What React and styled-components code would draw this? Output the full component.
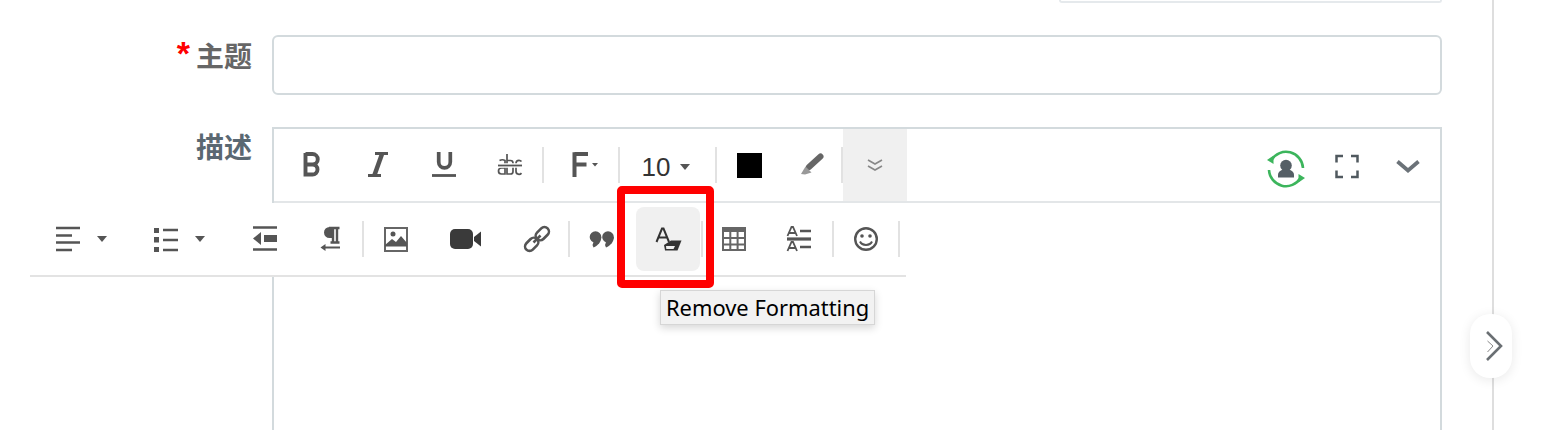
import styled, { createGlobalStyle } from "styled-components";

const GlobalStyle = createGlobalStyle`
  html, body {
    margin: 0;
    padding: 0;
    background: #fff;
    overflow: hidden;
  }
  * {
    box-sizing: border-box;
  }
`;

const Page = styled.div`
  display: flex;
  width: 1546px;
  height: 430px;
  overflow: hidden;
  position: relative;
  font-family: "Noto Sans CJK SC", "Liberation Sans", sans-serif;
`;

const Main = styled.main`
  width: 1492px;
  height: 430px;
  flex: none;
`;

const Rail = styled.aside`
  flex: 1;
  border-left: 2px solid #dedede;
`;

const Handle = styled.button`
  position: absolute;
  left: 1470px;
  top: 314px;
  width: 42px;
  height: 64px;
  padding: 0;
  border: none;
  border-radius: 20px;
  background: #fff;
  box-shadow: 0 2px 12px rgba(0, 0, 0, 0.09);
  display: flex;
  align-items: center;
  justify-content: center;
`;

const PrevField = styled.div`
  width: 383px;
  height: 3px;
  margin-left: 1059px;
  border: 2px solid #e5e9ec;
  border-top: none;
  border-radius: 0 0 6px 6px;
`;

const Row = styled.div`
  display: grid;
  grid-template-columns: 272px 1170px;
  margin-top: 32px;
`;

const Label = styled.label`
  display: flex;
  justify-content: flex-end;
  align-items: center;
  gap: 6px;
  height: 38px;
  margin-top: ${(p) => p.$top}px;
  padding-right: 20px;
  font-size: 28px;
  font-weight: 700;
  line-height: 38px;
  color: ${(p) => p.$color};
`;

const Star = styled.span`
  font-family: "Liberation Sans", sans-serif;
  font-size: 34px;
  font-weight: 700;
  color: #f00;
  height: 38px;
  line-height: 34px;
`;

const TextInput = styled.input`
  display: block;
  width: 100%;
  height: 60px;
  border: 2px solid #d3dadd;
  border-radius: 6px;
  background: #fff;
  outline: none;
`;

const Editor = styled.div`
  position: relative;
  height: 340px;
  border: 2px solid #d3dadd;
  border-bottom: none;
`;

const Toolbar = styled.div`
  display: flex;
  align-items: center;
  height: 74px;
  padding-left: 4px;
  border-bottom: 2px solid #e3e6e8;
`;

const ToolButton = styled.button`
  display: flex;
  align-items: center;
  justify-content: center;
  flex: none;
  width: ${(p) => p.$w || 62}px;
  height: 64px;
  padding: 0;
  border: none;
  background: transparent;
  color: #555;
`;

const DropButton = styled(ToolButton)`
  justify-content: flex-start;
  gap: 15px;
  padding-left: 18px;
`;

const SizeButton = styled(ToolButton)`
  gap: 10px;
  padding: 4px 3px 0 0;
  font-family: "Liberation Sans", sans-serif;
  font-size: 26px;
  color: #333;
`;

const MoreButton = styled(ToolButton)`
  align-self: stretch;
  height: auto;
  background: #f0f0f0;
`;

const ActiveButton = styled(ToolButton)`
  width: 64px;
  margin: 0 1px 0 4px;
  border-radius: 8px;
  background: #f0f0f0;
`;

const Sep = styled.span`
  flex: none;
  width: 2px;
  height: 36px;
  background: #e2e2e2;
`;

const Caret = styled.span`
  width: 0;
  height: 0;
  border-left: 5.5px solid transparent;
  border-right: 5.5px solid transparent;
  border-top: 6px solid #555;
`;

const Swatch = styled.span`
  width: 25px;
  height: 25px;
  background: #000;
`;

const RightTools = styled.div`
  display: flex;
  align-items: center;
  margin-left: auto;
  padding-right: 2px;
`;

const Popup = styled.div`
  position: absolute;
  left: -244px;
  top: 74px;
  display: flex;
  align-items: center;
  width: 876px;
  height: 74px;
  padding-left: 6px;
  background: #fff;
  border-bottom: 2px solid #e3e3e3;
`;

const Highlight = styled.div`
  position: absolute;
  left: 587px;
  top: -17px;
  width: 97px;
  height: 102px;
  border: 8px solid #f00;
  border-radius: 5px;
  pointer-events: none;
`;

const Tooltip = styled.div`
  position: absolute;
  left: 630px;
  top: 87px;
  width: 215px;
  height: 35px;
  padding-left: 5px;
  border: 1px solid #d6d6d6;
  background: #f2f2f2;
  box-shadow: 0 3px 8px rgba(0, 0, 0, 0.16);
  font-family: "Noto Sans", sans-serif;
  font-size: 21.9px;
  line-height: 33px;
  white-space: nowrap;
  color: #000;
`;

const Glyph = styled.svg`
  display: block;
  flex: none;
  overflow: visible;
  fill: none;
  stroke: none;
`;

const Icon = ({ w = 28, h = 28, children }) => (
  <Glyph width={w} height={h} viewBox={`0 0 ${w} ${h}`}>
    {children}
  </Glyph>
);

const G = "#555";

const BoldIcon = () => (
  <Icon>
    <path d="M8.5 3H15.5a5.25 5.25 0 0 1 0 10.5H8.5M15.5 13.5a5 5 0 0 1 0 10H8.5V2" stroke={G} strokeWidth="3.9" />
  </Icon>
);

const ItalicIcon = () => (
  <Icon>
    <path d="M12 2.5H25M5 24.5H18" stroke={G} strokeWidth="3" />
    <path d="M19 3L11.5 24" stroke={G} strokeWidth="4.5" />
  </Icon>
);

const UnderlineIcon = () => (
  <Icon>
    <path d="M9.7 1V11a5.8 5.8 0 0 0 11.6 0V1" stroke={G} strokeWidth="3.7" />
    <path d="M3 24.5H27" stroke={G} strokeWidth="2.8" />
  </Icon>
);

const StrikeIcon = () => (
  <Icon>
    <g stroke={G} strokeWidth="1.7">
      <path d="M4.5 9.5q3-1.5 5.5 0v13.5h-3.5a2.7 2.7 0 0 1 0-6h3.5" />
      <path d="M12 3V23h3.5a2.5 2.5 0 0 0 2.5-2.5v-8.5a2.5 2.5 0 0 0-2.5-2.5H12" />
      <path d="M26.5 10.5q-1-1.2-2.5-1.2a3 3 0 0 0-3 3v8a3 3 0 0 0 3 3q1.5 0 2.5-1.2" />
    </g>
    <path d="M3 14.5H27" stroke="#fff" strokeWidth="4.5" />
    <path d="M3 14.5H27" stroke={G} strokeWidth="1.8" />
  </Icon>
);

const FontIcon = () => (
  <Icon w={36}>
    <path d="M11.5 3H25M11.5 13.5H23.5M11.5 26V1.2" stroke={G} strokeWidth="4" />
    <path d="M29 12H35L32 15.5Z" fill={G} />
  </Icon>
);

const BrushIcon = () => (
  <Icon>
    <path d="M23.5 5.5L12 16" stroke="#666" strokeWidth="6" strokeLinecap="round" />
    <path d="M4 23L8.5 15.5L14.5 21.5L8 23.5Z" fill="#999" />
  </Icon>
);

const ChevronsIcon = () => (
  <Icon>
    <path d="M7 9L14 13L21 9M7 15L14 19L21 15" stroke="#888" strokeWidth="1.7" />
  </Icon>
);

const SyncArc = ({ flip }) => (
  <g transform={flip ? "rotate(180 20 19)" : undefined}>
    <path d="M37 18A17 17 0 0 0 5.5 10" stroke="#3cb55c" strokeWidth="2.6" />
    <path d="M7.5 5.5L1 10L7.5 14Z" fill="#3cb55c" />
  </g>
);

const SyncIcon = () => (
  <Icon w={40} h={38}>
    <g transform="translate(0 4)">
      <SyncArc />
      <SyncArc flip />
      <circle cx="20" cy="15.5" r="5.8" fill="#555f66" />
      <path d="M12 27.5V25c0-3.5 3-5.5 8-5.5s8 2 8 5.5v2.5Z" fill="#555f66" />
    </g>
  </Icon>
);

const FullscreenIcon = () => (
  <Icon>
    <path d="M3.5 11.5V5H10M18 5H24.5V11.5M24.5 19.5V26H18M10 26H3.5V19.5" stroke="#50595f" strokeWidth="2.5" />
  </Icon>
);

const CollapseIcon = () => (
  <Icon>
    <path d="M3.5 10.5L14 19.5L24.5 10.5" stroke="#6b7278" strokeWidth="3.8" />
  </Icon>
);

const AlignIcon = () => (
  <Icon>
    <path d="M2 3H26M2 10.5H18M2 17.5H26M2 25H18" stroke={G} strokeWidth="2.6" />
  </Icon>
);

const ListIcon = () => (
  <Icon>
    <path d="M2 3H7V8H2ZM2 12H7V17.5H2ZM2 22H7V27H2Z" fill={G} />
    <path d="M11 5H26M11 15H26M11 25H26" stroke={G} strokeWidth="2.4" />
  </Icon>
);

const OutdentIcon = () => (
  <Icon>
    <path d="M2 2.5H26M2 24.5H26" stroke={G} strokeWidth="2.4" />
    <path d="M2 13.5L10 7V20Z" fill={G} />
    <path d="M13 10H26V17H13Z" fill={G} />
  </Icon>
);

const ParagraphIcon = () => (
  <Icon>
    <path d="M16 2H13.5a5.5 5.5 0 0 0 0 11H16Z" fill={G} />
    <path d="M13 3H23.5M17 3V18M21 3V18M14.5 17.5H23.5" stroke={G} strokeWidth="2.4" />
    <path d="M8 22.5H24" stroke={G} strokeWidth="2" />
    <path d="M4.5 22.5L9.5 19V26Z" fill={G} />
  </Icon>
);

const ImageIcon = () => (
  <Icon>
    <path d="M3 3H25V26H3Z" stroke="#666" strokeWidth="2" />
    <circle cx="11" cy="9" r="2.5" fill="#555" />
    <path d="M3 20L10 14L14 17L19 11L25 18V21.5H3Z" fill="#555" />
  </Icon>
);

const VideoIcon = () => (
  <Icon w={32}>
    <rect x="0" y="4" width="23" height="20" rx="5" fill="#3a3a3a" />
    <path d="M24 12L31 6.5V21.5L24 16Z" fill="#3a3a3a" />
  </Icon>
);

const LinkIcon = () => (
  <Icon>
    <g stroke={G} strokeWidth="2.6" transform="rotate(-45 14 14)">
      <rect x="-1" y="9.5" width="15" height="9" rx="4.5" />
      <rect x="14" y="9.5" width="15" height="9" rx="4.5" />
      <path d="M9 14H19" />
    </g>
  </Icon>
);

const QuoteIcon = () => (
  <Icon>
    <circle cx="8.5" cy="12" r="5.8" fill={G} />
    <path d="M14.3 12C14.3 17 11 20.5 6.5 22.5L5.5 20L8 13Z" fill={G} />
    <circle cx="21" cy="12" r="5.8" fill={G} />
    <path d="M26.8 12C26.8 17 23.5 20.5 19 22.5L18 20L20.5 13Z" fill={G} />
  </Icon>
);

const ClearFormatIcon = () => (
  <Icon>
    <path d="M2.5 17L8 3.5H9.5L15 17M4.5 12.5H13" stroke="#333" strokeWidth="2" />
    <path d="M17 15.5H27.5L23.5 25.5H11L10 20Z" fill="#333" />
    <path d="M12 21H21L19.5 24H12.3Z" fill="#f0f0f0" />
  </Icon>
);

const TableIcon = () => (
  <Icon>
    <path d="M2 2H26V7H2Z" fill="#666" />
    <path d="M3 3H25V25H3ZM3 13H25M3 19.5H25M10.3 3V25M17.6 3V25" stroke="#666" strokeWidth="2" />
  </Icon>
);

const LineHeightIcon = () => (
  <Icon>
    <path d="M2.5 11L6.5 2H8L12 11M4 8H10.5M2.5 26L6.5 17H8L12 26M4 23H10.5" stroke={G} strokeWidth="1.8" />
    <path d="M15 6H26M15 22H26" stroke={G} strokeWidth="2.6" />
    <path d="M2 14H26" stroke={G} strokeWidth="3.2" />
  </Icon>
);

const EmojiIcon = () => (
  <Icon>
    <circle cx="14" cy="14" r="10.8" stroke={G} strokeWidth="2.4" />
    <circle cx="10" cy="11" r="1.8" fill={G} />
    <circle cx="18" cy="11" r="1.8" fill={G} />
    <path d="M8 16.5C10 21 18 21 20 16.5" stroke={G} strokeWidth="2" />
  </Icon>
);

const HandleIcon = () => (
  <Icon w={22} h={36}>
    <path d="M7 4L21 18L7 32" stroke="#6a6f73" strokeWidth="2.6" />
    <path d="M7.5 13L13 18L7.5 24" stroke="#888" strokeWidth="1" />
  </Icon>
);

const App = () => {
  return (
    <Page>
      <GlobalStyle />
      <Main>
        <PrevField />
        <Row>
          <Label $top={1} $color="#666">
            <Star>*</Star>
            主题
          </Label>
          <TextInput type="text" />
        </Row>
        <Row>
          <Label $top={0} $color="#5a6872">描述</Label>
          <Editor>
            <Toolbar>
              <ToolButton $w={66}><BoldIcon /></ToolButton>
              <ToolButton $w={66}><ItalicIcon /></ToolButton>
              <ToolButton $w={66}><UnderlineIcon /></ToolButton>
              <ToolButton $w={66}><StrikeIcon /></ToolButton>
              <Sep />
              <ToolButton $w={74}><FontIcon /></ToolButton>
              <Sep />
              <SizeButton $w={95}>10<Caret /></SizeButton>
              <Sep />
              <ToolButton $w={64}><Swatch /></ToolButton>
              <ToolButton $w={60}><BrushIcon /></ToolButton>
              <Sep />
              <MoreButton $w={64}><ChevronsIcon /></MoreButton>
              <RightTools>
                <ToolButton $w={61}><SyncIcon /></ToolButton>
                <ToolButton $w={61}><FullscreenIcon /></ToolButton>
                <ToolButton $w={61}><CollapseIcon /></ToolButton>
              </RightTools>
            </Toolbar>
            <Popup>
              <DropButton $w={98}><AlignIcon /><Caret /></DropButton>
              <DropButton $w={98}><ListIcon /><Caret /></DropButton>
              <ToolButton $w={65}><OutdentIcon /></ToolButton>
              <ToolButton $w={65}><ParagraphIcon /></ToolButton>
              <Sep />
              <ToolButton $w={63}><ImageIcon /></ToolButton>
              <ToolButton $w={78}><VideoIcon /></ToolButton>
              <ToolButton $w={63}><LinkIcon /></ToolButton>
              <Sep />
              <ToolButton><QuoteIcon /></ToolButton>
              <ActiveButton><ClearFormatIcon /></ActiveButton>
              <Sep />
              <ToolButton><TableIcon /></ToolButton>
              <ToolButton $w={67}><LineHeightIcon /></ToolButton>
              <Sep />
              <ToolButton $w={64}><EmojiIcon /></ToolButton>
              <Sep />
              <Highlight />
              <Tooltip>Remove Formatting</Tooltip>
            </Popup>
          </Editor>
        </Row>
      </Main>
      <Rail />
      <Handle><HandleIcon /></Handle>
    </Page>
  );
};

export default App;
